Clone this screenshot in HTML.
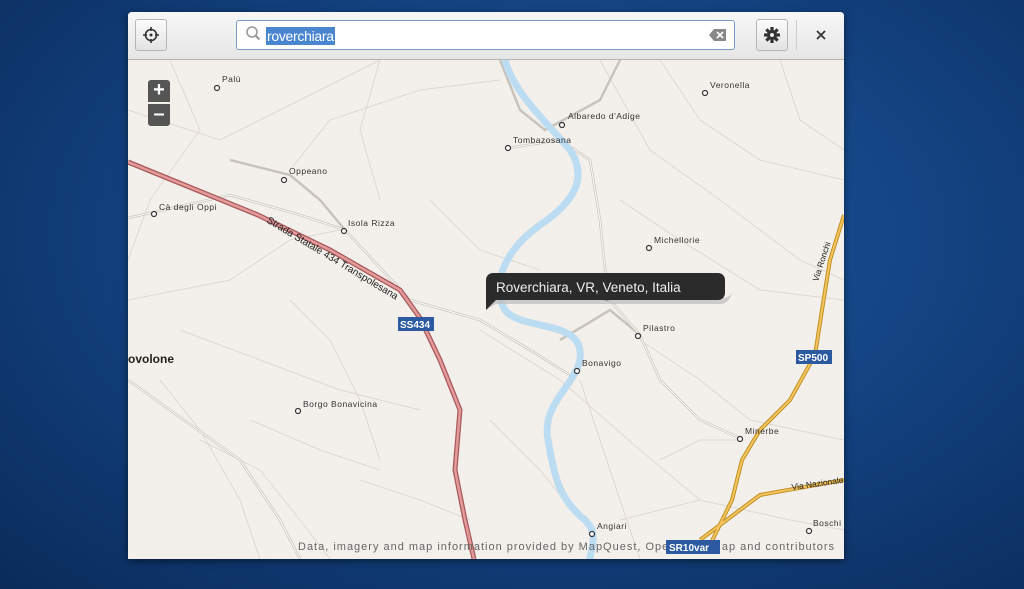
<!DOCTYPE html>
<html><head><style>
html,body{margin:0;padding:0;width:1024px;height:589px;overflow:hidden;font-family:"Liberation Sans","DejaVu Sans",sans-serif}
body{background:radial-gradient(ellipse at 55% 40%,#1d5aa2 0%,#134280 50%,#0a2b5a 100%)}
.win{position:absolute;left:128px;top:12px;width:716px;height:547px;background:#f3f0eb;border-radius:4px 4px 0 0;overflow:hidden;box-shadow:0 2px 8px rgba(0,0,0,.5)}
.hdr{position:absolute;left:0;top:0;width:716px;height:47px;background:linear-gradient(#f7f7f7,#e6e6e6);border-bottom:1px solid #b4b4b4}
.btn{position:absolute;top:7px;width:32px;height:32px;border:1px solid #b5b5b5;border-radius:3px;background:linear-gradient(#fbfbfb,#e3e3e3);box-sizing:border-box}
.search{position:absolute;left:108px;top:8px;width:499px;height:30px;border:1px solid #7a9cc4;border-radius:3px;background:#fff;box-sizing:border-box}
.sel{position:absolute;left:29px;top:6px;height:18px;background:#4a86d0;color:#fff;font-size:14px;line-height:18px;padding:0 1px;letter-spacing:-.3px}
svg.map{position:absolute;left:0;top:48px}
.zoom{position:absolute;left:20px;width:22px;height:22px;background:#555;color:#fff;font-size:20px;line-height:21px;text-align:center;font-weight:bold}
</style></head><body>
<div class="win">
<div class="hdr">
 <div class="btn" style="left:7px"><svg width="30" height="30"><circle cx="15" cy="15" r="5.5" fill="none" stroke="#333" stroke-width="1.6"/><circle cx="15" cy="15" r="1.5" fill="#333"/><path d="M15 7v4M15 19v4M7 15h4M19 15h4" stroke="#333" stroke-width="1.6"/></svg></div>
 <div class="search">
  <svg width="20" height="28" style="position:absolute;left:7px;top:0"><circle cx="8" cy="11" r="5" fill="none" stroke="#999" stroke-width="1.6"/><path d="M11.5 14.5l4 4" stroke="#999" stroke-width="2"/></svg>
  <div class="sel">roverchiara</div>
  <svg width="18" height="14" style="position:absolute;right:7px;top:7px"><path d="M5 1h12v12H5L0 7z" fill="#888"/><path d="M8 4l6 6M14 4l-6 6" stroke="#fff" stroke-width="1.6"/></svg>
 </div>
 <div class="btn" style="left:628px"><svg width="30" height="30"><g transform="translate(15 15)" fill="#333"><circle r="5"/><g id="t"><rect x="-1.6" y="-8" width="3.2" height="16"/></g><use href="#t" transform="rotate(45)"/><use href="#t" transform="rotate(90)"/><use href="#t" transform="rotate(135)"/></g><circle cx="15" cy="15" r="2" fill="#eee"/></svg></div>
 <div style="position:absolute;left:668px;top:8px;width:1px;height:30px;background:#ccc"></div>
 <svg width="12" height="12" style="position:absolute;left:687px;top:17px"><path d="M2 2l8 8M10 2l-8 8" stroke="#333" stroke-width="1.8"/></svg>
</div>
<svg class="map" width="716" height="499" viewBox="128 60 716 499" font-family="Liberation Sans, sans-serif" font-size="8.5" fill="#333">
<rect x="128" y="60" width="716" height="499" fill="#f3f0eb"/>
<g stroke="#ddd8d0" stroke-width="1" fill="none">
<path d="M128 110 L220 140 L300 100 L380 60"/><path d="M170 60 L200 130 L150 200 L128 260"/><path d="M290 170 L330 120 L420 90 L500 80"/><path d="M128 300 L230 280 L290 240 L340 230"/><path d="M180 330 L260 360 L340 390 L420 410"/><path d="M200 440 L260 470 L300 520 L330 559"/><path d="M380 60 L360 130 L380 200"/><path d="M600 60 L650 150 L720 200 L800 260 L844 280"/><path d="M660 60 L700 120 L760 160 L844 180"/><path d="M620 200 L680 240 L760 290 L844 300"/><path d="M640 340 L700 380 L750 420 L844 440"/><path d="M480 330 L560 380 L640 450 L700 500"/><path d="M580 380 L600 440 L620 500 L640 559"/><path d="M490 420 L540 470 L580 520"/><path d="M250 420 L320 450 L380 470"/><path d="M780 60 L800 120 L844 150"/><path d="M430 200 L480 250 L540 270"/><path d="M160 380 L200 430 L240 500 L260 559"/><path d="M360 480 L420 500 L470 520"/><path d="M620 520 L700 500 L790 520 L844 530"/><path d="M660 460 L700 440 L740 440"/><path d="M290 300 L330 340 L360 400 L380 460"/></g>
<g stroke="#c8c4bd" stroke-width="2.5" fill="none"><path d="M128 218 L230 195 L300 215 L345 230 L410 300 L480 320 L530 350 L570 375"/><path d="M500 60 L520 110 L545 130 L600 100 L620 60"/><path d="M508 148 L560 140 L590 160 L600 220 L608 298 L640 335 L660 380 L700 420 L740 438"/><path d="M560 340 L610 310 L640 335"/><path d="M230 160 L290 175 L320 200 L345 230"/><path d="M128 380 L170 410 L240 460 L280 520 L300 559"/></g>
<g stroke="#fdfcfa" stroke-width="1" fill="none"><path d="M128 218 L230 195 L300 215 L345 230 L410 300 L480 320 L530 350 L570 375"/><path d="M508 148 L560 140 L590 160 L600 220 L608 298 L640 335 L660 380 L700 420 L740 438"/><path d="M128 380 L170 410 L240 460 L280 520 L300 559"/></g>
<path d="M505 60 C515 95 545 120 570 150 C590 180 570 205 540 225 C505 250 490 285 505 310 C520 330 575 320 580 350 C585 380 540 400 548 440 C555 480 560 500 585 520 C600 535 590 550 590 559" stroke="#bcdcf2" stroke-width="7" fill="none"/>
<path d="M128 162 L258 215 L330 250 L400 290 L420 318 L440 360 L460 410 L455 470 L465 520 L474 559" stroke="#a9585a" stroke-width="5" fill="none"/>
<path d="M128 162 L258 215 L330 250 L400 290 L420 318 L440 360 L460 410 L455 470 L465 520 L474 559" stroke="#e29a9a" stroke-width="2.5" fill="none"/>
<g fill="none" stroke="#c09020" stroke-width="4"><path d="M844 215 L830 260 L822 310 L815 355 L790 400 L760 430 L742 460 L732 500 L710 545"/><path d="M700 540 L760 495 L844 480"/></g>
<g fill="none" stroke="#f4c460" stroke-width="2"><path d="M844 215 L830 260 L822 310 L815 355 L790 400 L760 430 L742 460 L732 500 L710 545"/><path d="M700 540 L760 495 L844 480"/></g>
<g fill="#fff" stroke="#333" stroke-width="1.2">
<circle cx="217" cy="88" r="2.5"/><circle cx="705" cy="93" r="2.5"/><circle cx="562" cy="125" r="2.5"/><circle cx="508" cy="148" r="2.5"/><circle cx="284" cy="180" r="2.5"/><circle cx="154" cy="214" r="2.5"/><circle cx="344" cy="231" r="2.5"/><circle cx="649" cy="248" r="2.5"/><circle cx="607" cy="298" r="2.5"/><circle cx="638" cy="336" r="2.5"/><circle cx="577" cy="371" r="2.5"/><circle cx="298" cy="411" r="2.5"/><circle cx="740" cy="439" r="2.5"/><circle cx="592" cy="534" r="2.5"/><circle cx="809" cy="531" r="2.5"/></g>
<g letter-spacing=".5"><text x="222" y="82">Palù</text><text x="710" y="88">Veronella</text><text x="568" y="119">Albaredo d'Adige</text><text x="513" y="143">Tombazosana</text><text x="289" y="174">Oppeano</text><text x="159" y="210">Cà degli Oppi</text><text x="348" y="226">Isola Rizza</text><text x="654" y="243">Michellorie</text><text x="643" y="331">Pilastro</text><text x="582" y="366">Bonavigo</text><text x="303" y="407">Borgo Bonavicina</text><text x="745" y="434">Minerbe</text><text x="597" y="529">Angiari</text><text x="813" y="526">Boschi</text></g>
<text x="128" y="363" font-size="12" font-weight="bold" fill="#222">ovolone</text>
<text transform="translate(266 222) rotate(31)" font-size="10" fill="#222">Strada Statale 434 Transpolesana</text>
<text transform="translate(818 282) rotate(-72)" font-size="8.5" fill="#222">Via Ronchi</text>
<text transform="translate(792 490) rotate(-8)" font-size="8.5" fill="#222">Via Nazionale</text>
<rect x="398" y="317" width="36" height="14" fill="#2b5aa0"/><text x="400" y="328" fill="#fff" font-size="10" font-weight="bold">SS434</text>
<rect x="796" y="350" width="36" height="14" fill="#2b5aa0"/><text x="798" y="361" fill="#fff" font-size="10" font-weight="bold">SP500</text>
<text x="298" y="550" font-size="11" fill="#666" textLength="536" lengthAdjust="spacing">Data, imagery and map information provided by MapQuest, OpenStreetMap and contributors</text>
<rect x="666" y="540" width="54" height="14" fill="#2b5aa0"/><text x="669" y="551" fill="#fff" font-size="10" font-weight="bold">SR10var</text>
<path d="M486 310 L488 298 L722 298 Q730 298 732 292 Q730 302 722 304 L496 304 Z" fill="#bbb" opacity=".7"/>
<rect x="486" y="273" width="239" height="27" rx="7" fill="#2b2b2b"/><path d="M486 290 L486 310 L498 298 Z" fill="#2b2b2b"/>
<text x="496" y="292" fill="#eee" font-size="13.5">Roverchiara, VR, Veneto, Italia</text>
</svg>
<div class="zoom" style="top:68px;border-radius:3px 3px 0 0">+</div>
<div class="zoom" style="top:92px;border-radius:0 0 3px 3px">–</div>
</div>
</body></html>
